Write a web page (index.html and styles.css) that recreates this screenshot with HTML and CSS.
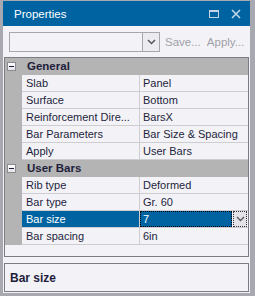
FILE: index.html
```html
<!DOCTYPE html>
<html>
<head>
<meta charset="utf-8">
<link rel="stylesheet" href="styles.css">
</head>
<body>
<div class="panel">
  <div class="titlebar">
    <span class="title">Properties</span>
    <span class="tbtns">
      <svg class="ico" width="10" height="8" viewBox="0 0 10 8"><rect x="0.5" y="0.5" width="9" height="7" fill="none" stroke="#c3d5e4" stroke-width="1"/><rect x="0" y="0" width="10" height="2" fill="#c3d5e4"/></svg>
      <svg class="ico" width="10" height="10" viewBox="0 0 10 10"><path d="M1 1 L9 9 M9 1 L1 9" stroke="#c3d5e4" stroke-width="1.6" fill="none"/></svg>
    </span>
  </div>
  <div class="content">
    <div class="toolbar">
      <div class="combo">
        <div class="combo-field"></div>
        <div class="combo-btn"><svg width="9" height="6" viewBox="0 0 9 6"><path d="M1 1 L4.5 4.5 L8 1" stroke="#55555f" stroke-width="1.5" fill="none"/></svg></div>
      </div>
      <span class="tool">Save...</span>
      <span class="tool">Apply...</span>
    </div>
    <div class="grid">
      <div class="cat"><span class="margin"><span class="minus"></span></span><span class="cat-name">General</span></div>
      <div class="row"><span class="margin"></span><span class="name">Slab</span><span class="value">Panel</span></div>
      <div class="row"><span class="margin"></span><span class="name">Surface</span><span class="value">Bottom</span></div>
      <div class="row"><span class="margin"></span><span class="name">Reinforcement Dire...</span><span class="value">BarsX</span></div>
      <div class="row"><span class="margin"></span><span class="name">Bar Parameters</span><span class="value">Bar Size &amp; Spacing</span></div>
      <div class="row"><span class="margin"></span><span class="name">Apply</span><span class="value">User Bars</span></div>
      <div class="cat"><span class="margin"><span class="minus"></span></span><span class="cat-name">User Bars</span></div>
      <div class="row"><span class="margin"></span><span class="name">Rib type</span><span class="value">Deformed</span></div>
      <div class="row"><span class="margin"></span><span class="name">Bar type</span><span class="value">Gr. 60</span></div>
      <div class="row sel"><span class="margin"></span><span class="name">Bar size</span><span class="value edit"><span class="editor">7</span><span class="ddbtn"><svg width="9" height="6" viewBox="0 0 9 6"><path d="M1 1 L4.5 4.5 L8 1" stroke="#55555f" stroke-width="1.3" fill="none"/></svg></span></span></div>
      <div class="row"><span class="margin"></span><span class="name">Bar spacing</span><span class="value">6in</span></div>
      <div class="empty"></div>
    </div>
    <div class="desc"><span class="desc-title">Bar size</span></div>
  </div>
</div>
</body>
</html>
```
FILE: styles.css
```css
html, body {
  margin: 0;
  padding: 0;
}
body {
  width: 255px;
  height: 296px;
  overflow: hidden;
  font-family: "Liberation Sans", Arial, sans-serif;
  font-size: 11px;
  color: #1e1e3c;
}
.panel {
  box-sizing: border-box;
  width: 255px;
  height: 296px;
  background: #a8a8b0;
  padding: 1px 5px 4px 3px;
  display: flex;
  flex-direction: column;
}
.titlebar {
  height: 25px;
  background: #0063a1;
  display: flex;
  align-items: center;
  justify-content: space-between;
  padding: 0 9px 0 11px;
  flex: none;
}
.title {
  color: #ffffff;
  font-size: 11.5px;
}
.tbtns {
  display: flex;
  align-items: center;
  gap: 12px;
}
.ico {
  display: block;
}
.content {
  flex: 1;
  background: #f3f3f7;
  display: flex;
  flex-direction: column;
  padding: 0 1px 1px 1px;
}
.toolbar {
  height: 31px;
  display: flex;
  align-items: flex-start;
  padding: 6px 0 0 5px;
  box-sizing: border-box;
  flex: none;
}
.combo {
  width: 151px;
  height: 20px;
  box-sizing: border-box;
  border: 1px solid #a6a6ad;
  display: flex;
}
.combo-field {
  flex: 1;
}
.combo-btn {
  width: 16px;
  border-left: 1px solid #a6a6ad;
  background: #ececf0;
  display: flex;
  align-items: center;
  justify-content: center;
}
.tool {
  color: #a0a0a8;
  font-size: 11.5px;
  line-height: 20px;
  margin-left: 5px;
}
.tool + .tool {
  margin-left: 6px;
}
.grid {
  flex: none;
  height: 200px;
  box-sizing: border-box;
  border: 1px solid #7c7c82;
  display: flex;
  flex-direction: column;
}
.cat, .row {
  height: 17px;
  box-sizing: border-box;
  display: flex;
  flex: none;
}
.cat {
  background: #b4b4b4;
  border-bottom: 1px solid #b4b4b4;
  align-items: center;
}
.margin {
  width: 17px;
  flex: none;
  background: #b4b4b4;
  display: flex;
  align-items: center;
  justify-content: center;
  align-self: stretch;
}
.minus {
  width: 9px;
  height: 9px;
  box-sizing: border-box;
  border: 1px solid #8a8a90;
  background: linear-gradient(#ffffff, #e4e4ea);
  position: relative;
  margin-left: -5px;
}
.minus::after {
  content: "";
  position: absolute;
  left: 1px;
  top: 3px;
  width: 5px;
  height: 1px;
  background: #1e1e3c;
}
.cat-name {
  font-weight: bold;
  font-size: 11.5px;
  padding-left: 5px;
}
.row .name {
  width: 118px;
  flex: none;
  box-sizing: border-box;
  padding-left: 4px;
  border-bottom: 1px solid #cdcdd2;
  border-right: 1px solid #cdcdd2;
  line-height: 16px;
  white-space: nowrap;
  overflow: hidden;
}
.row .value {
  flex: 1;
  box-sizing: border-box;
  padding-left: 3px;
  border-bottom: 1px solid #cdcdd2;
  line-height: 16px;
  white-space: nowrap;
}
.row.sel .name {
  background: #0063a1;
  color: #ffffff;
}
.row .value.edit {
  padding: 0;
  display: flex;
}
.editor {
  width: 92px;
  box-sizing: border-box;
  background: #0063a1;
  color: #ffffff;
  border: 1px dotted #ffffff;
  outline: 1px dotted #000;
  outline-offset: -1px;
  padding-left: 2px;
  line-height: 14px;
}
.ddbtn {
  width: 14px;
  box-sizing: border-box;
  background: #e4e4e8;
  border: 1px dotted #333;
  margin-left: 1px;
  display: flex;
  align-items: center;
  justify-content: center;
}
.empty {
  flex: 1;
}
.desc {
  margin-top: 6px;
  height: 29px;
  box-sizing: border-box;
  border: 1px solid #7c7c82;
  display: flex;
  align-items: center;
  padding-left: 5px;
  flex: none;
}
.desc-title {
  font-weight: bold;
  font-size: 12px;
}
```
